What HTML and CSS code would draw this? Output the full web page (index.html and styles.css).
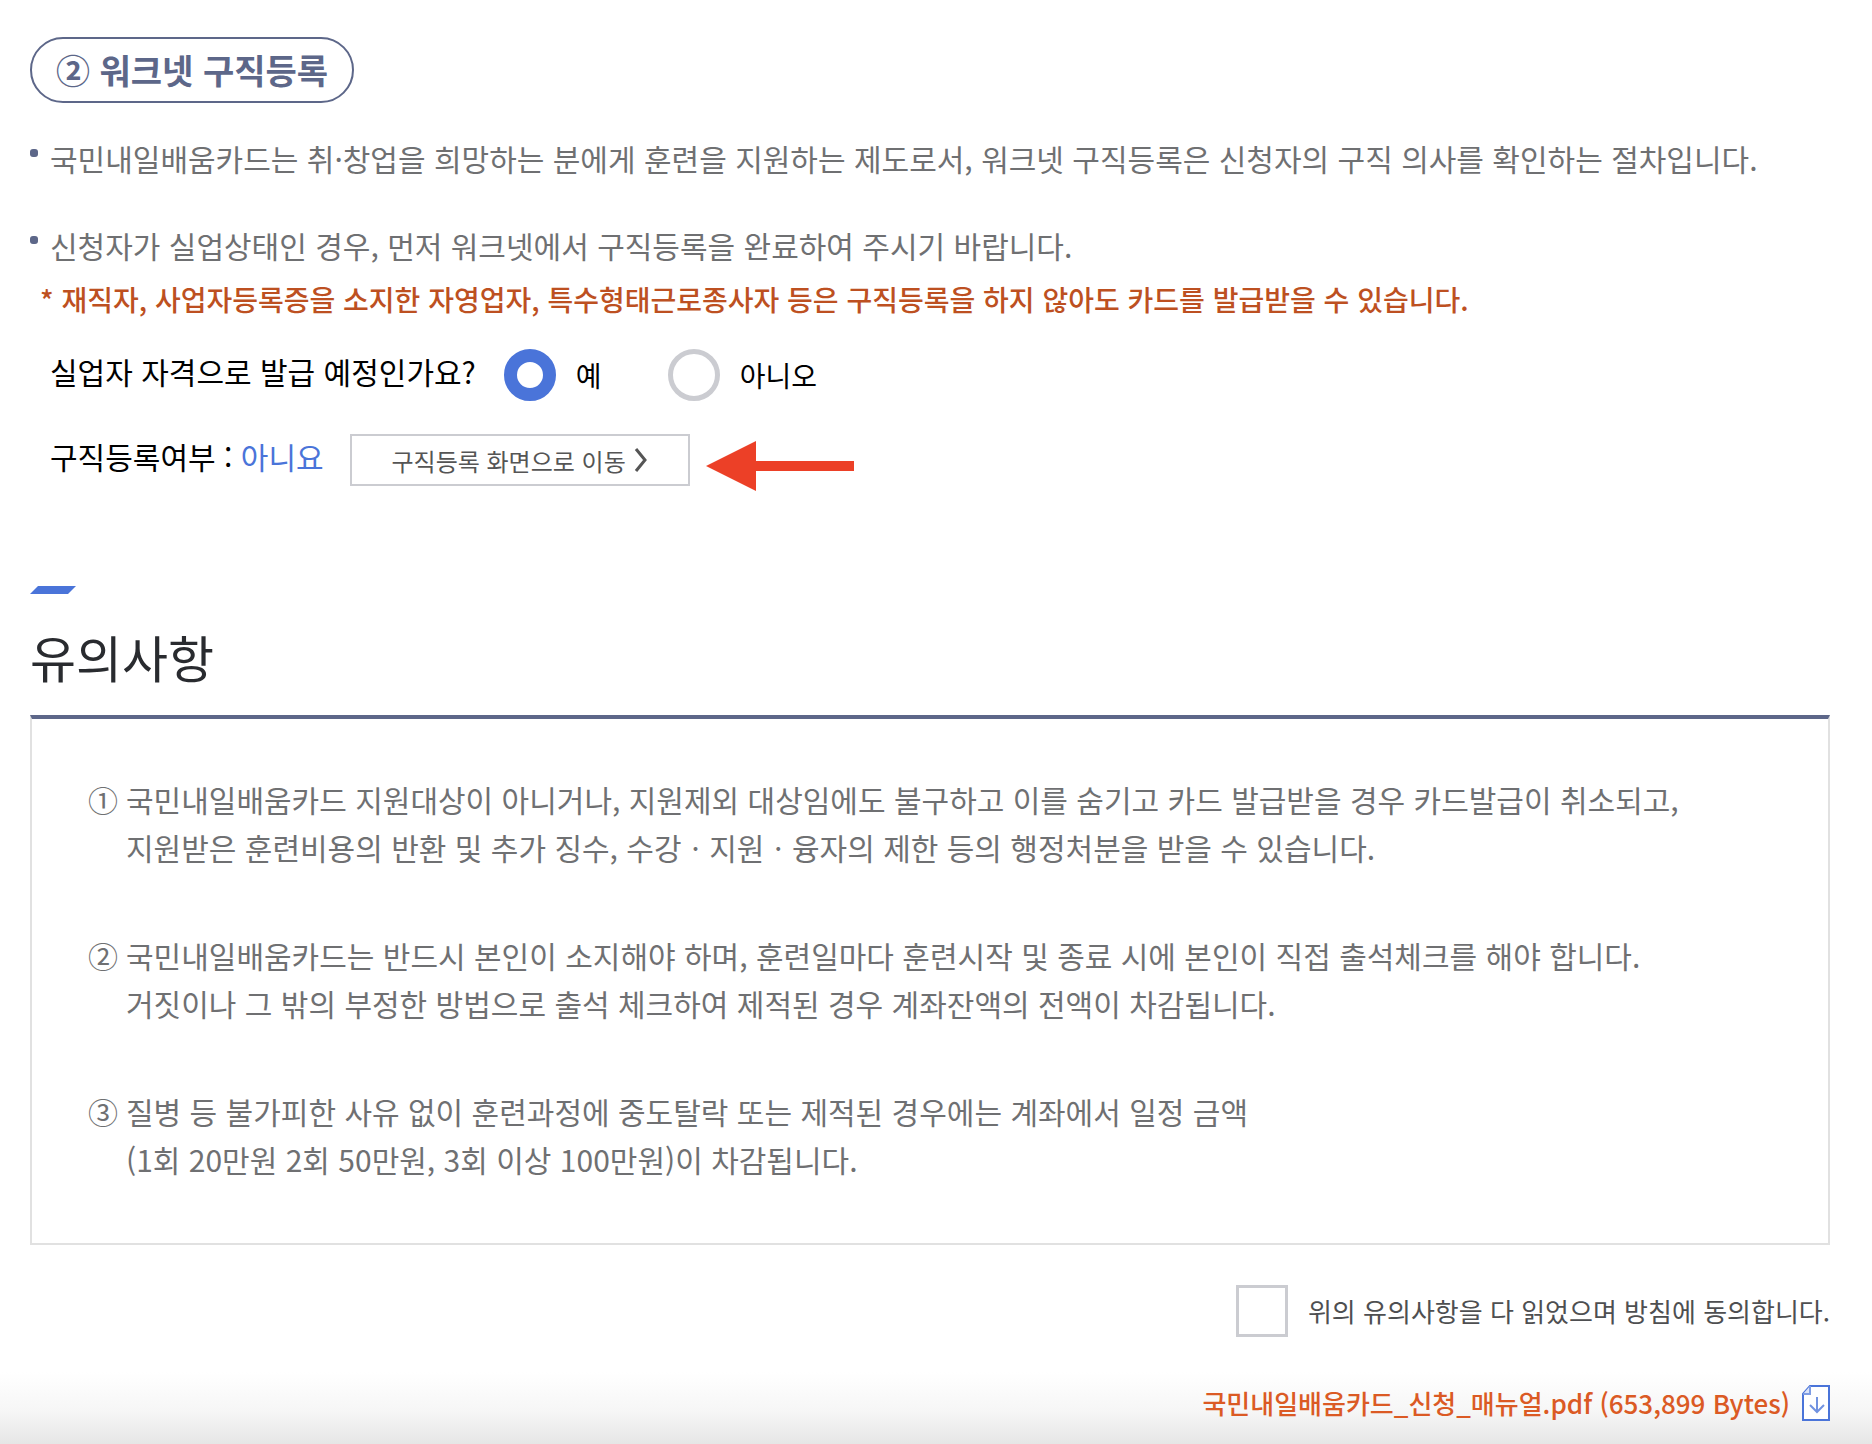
FILE: index.html
```html
<!DOCTYPE html>
<html lang="ko">
<head>
    <meta charset="UTF-8">
    <meta name="viewport" content="width=device-width, initial-scale=1.0">
    <title>워크넷 구직등록</title>
    <link rel="stylesheet" href="styles.css">
</head>
<body>
    <main class="page">
        <h2 class="step-title">② 워크넷 구직등록</h2>

        <ul class="guide-list">
            <li>국민내일배움카드는 취·창업을 희망하는 분에게 훈련을 지원하는 제도로서, 워크넷 구직등록은 신청자의 구직 의사를 확인하는 절차입니다.</li>
            <li>신청자가 실업상태인 경우, 먼저 워크넷에서 구직등록을 완료하여 주시기 바랍니다.</li>
        </ul>
        <p class="guide-note">* 재직자, 사업자등록증을 소지한 자영업자, 특수형태근로종사자 등은 구직등록을 하지 않아도 카드를 발급받을 수 있습니다.</p>

        <div class="question" role="radiogroup" aria-labelledby="question-text">
            <span id="question-text" class="question-text">실업자 자격으로 발급 예정인가요?</span>
            <div class="option">
                <input type="radio" id="answer-yes" name="answer" class="radio" checked>
                <label for="answer-yes">예</label>
            </div>
            <div class="option">
                <input type="radio" id="answer-no" name="answer" class="radio">
                <label for="answer-no">아니오</label>
            </div>
        </div>

        <div class="status">
            <p class="status-text">구직등록여부 : <span class="status-value">아니요</span></p>
            <button type="button" class="move-button">
                구직등록 화면으로 이동
                <svg width="14" height="26" viewBox="0 0 14 26" aria-hidden="true">
                    <path d="M2 2 L11 13 L2 24" fill="none" stroke="#555" stroke-width="3"/>
                </svg>
            </button>
            <svg class="arrow" width="148" height="50" viewBox="0 0 148 50" aria-hidden="true">
                <path d="M0 25 L50 0 V20 H148 V30 H50 V50 Z" fill="#ec4027"/>
            </svg>
        </div>

        <section class="notice">
            <svg class="notice-mark" width="46" height="8" viewBox="0 0 46 8" aria-hidden="true">
                <path d="M8 0 H46 L38 8 H0 Z" fill="#4a74d9"/>
            </svg>
            <h2 class="notice-title">유의사항</h2>
            <div class="notice-box">
                <div class="notice-item">
                    <span class="notice-number">①</span>
                    <p>국민내일배움카드 지원대상이 아니거나, 지원제외 대상임에도 불구하고 이를 숨기고 카드 발급받을 경우 카드발급이 취소되고,<br>지원받은 훈련비용의 반환 및 추가 징수, 수강ㆍ지원ㆍ융자의 제한 등의 행정처분을 받을 수 있습니다.</p>
                </div>
                <div class="notice-item">
                    <span class="notice-number">②</span>
                    <p>국민내일배움카드는 반드시 본인이 소지해야 하며, 훈련일마다 훈련시작 및 종료 시에 본인이 직접 출석체크를 해야 합니다.<br>거짓이나 그 밖의 부정한 방법으로 출석 체크하여 제적된 경우 계좌잔액의 전액이 차감됩니다.</p>
                </div>
                <div class="notice-item">
                    <span class="notice-number">③</span>
                    <p>질병 등 불가피한 사유 없이 훈련과정에 중도탈락 또는 제적된 경우에는 계좌에서 일정 금액<br>(1회 20만원 2회 50만원, 3회 이상 100만원)이 차감됩니다.</p>
                </div>
            </div>
        </section>

        <div class="agree">
            <input type="checkbox" id="agree" class="checkbox">
            <label for="agree">위의 유의사항을 다 읽었으며 방침에 동의합니다.</label>
        </div>

        <div class="download">
            <a href="#" class="download-link">
                국민내일배움카드_신청_매뉴얼.pdf (653,899 Bytes)
                <svg width="28" height="36" viewBox="0 0 28 36" aria-hidden="true">
                    <path d="M8 1 H27 V35 H1 V9 Z" fill="#fff" stroke="#4a74d9" stroke-width="2"/>
                    <path d="M8 1 V9 H1" fill="#dbe4f8" stroke="#7f9de4" stroke-width="2"/>
                    <path d="M15 12 V26 M8 20 L15 27 L22 20" fill="none" stroke="#7192e0" stroke-width="2"/>
                </svg>
            </a>
        </div>
    </main>
</body>
</html>
```
FILE: styles.css
```css
* {
    box-sizing: border-box;
}
body {
    margin: 0;
    font-family: "Noto Sans CJK KR", sans-serif;
    font-size: 30px;
    line-height: 48px;
    color: #6f7072;
    background-color: #fff;
}
h2, p, ul {
    margin: 0;
    padding: 0;
}
.page {
    min-height: 100vh;
    padding: 37px 42px 23px 30px;
    background: linear-gradient(to top, #e6e6e6, #f6f6f6 32px, #fff 72px) no-repeat;
}
.step-title {
    width: fit-content;
    padding: 0 24px;
    border: 2px solid #5d6789;
    border-radius: 33px;
    font-size: 34px;
    font-weight: 700;
    line-height: 62px;
    color: #5d6789;
}
.guide-list {
    display: flex;
    flex-direction: column;
    gap: 39px;
    margin-top: 31px;
    list-style: none;
}
.guide-list li {
    display: flex;
    gap: 12px;
}
.guide-list li::before {
    content: "";
    flex: none;
    width: 8px;
    height: 8px;
    margin-top: 15px;
    border-radius: 3px;
    background-color: #5d6789;
}
.guide-note {
    margin-top: 6px;
    padding-left: 10px;
    font-size: 28px;
    font-weight: 500;
    color: #bd5021;
}
.question {
    display: flex;
    align-items: center;
    margin-top: 26px;
    padding-left: 20px;
    line-height: 44px;
    color: #000;
}
.question-text {
    margin-right: 28px;
    padding-bottom: 8px;
}
.option {
    display: flex;
    align-items: center;
    gap: 20px;
    margin-right: 66px;
    font-size: 28px;
}
.radio {
    appearance: none;
    width: 52px;
    height: 52px;
    margin: 0;
    border: 5px solid #cbccd1;
    border-radius: 50%;
    background-color: #fff;
}
.radio:checked {
    border: 13px solid #4a74d9;
}
.status {
    display: flex;
    align-items: flex-start;
    margin-top: 33px;
    padding-left: 20px;
    line-height: 44px;
    color: #000;
}
.status-value {
    color: #4a74d9;
}
.move-button {
    display: flex;
    align-items: center;
    justify-content: center;
    gap: 8px;
    width: 340px;
    height: 52px;
    margin: 0 16px 0 26px;
    padding: 0;
    border: 2px solid #cbccd1;
    background-color: #fff;
    font-family: inherit;
    font-size: 24px;
    color: #555;
    cursor: pointer;
}
.arrow {
    margin-top: 7px;
}
.notice {
    margin-top: 95px;
}
.notice-mark {
    display: block;
}
.notice-title {
    margin: 26px 0 23px;
    font-size: 50px;
    font-weight: 400;
    line-height: 72px;
    color: #292b2f;
}
.notice-box {
    display: flex;
    flex-direction: column;
    gap: 60px;
    padding: 56px 56px 60px;
    border: 2px solid #e1e1e1;
    border-top: 4px solid #5d6789;
    background-color: #fff;
}
.notice-item {
    display: flex;
}
.notice-number {
    flex: none;
    width: 38px;
}
.agree {
    display: flex;
    align-items: center;
    justify-content: flex-end;
    gap: 20px;
    margin-top: 40px;
    font-size: 26px;
    color: #4e4f51;
}
.checkbox {
    appearance: none;
    width: 52px;
    height: 52px;
    margin: 0;
    border: 3px solid #cbccd1;
    background-color: #fff;
}
.download {
    display: flex;
    justify-content: flex-end;
    margin-top: 48px;
}
.download-link {
    display: flex;
    align-items: center;
    gap: 12px;
    font-size: 26px;
    font-weight: 500;
    line-height: 36px;
    color: #db5a24;
    text-decoration: none;
}
```
